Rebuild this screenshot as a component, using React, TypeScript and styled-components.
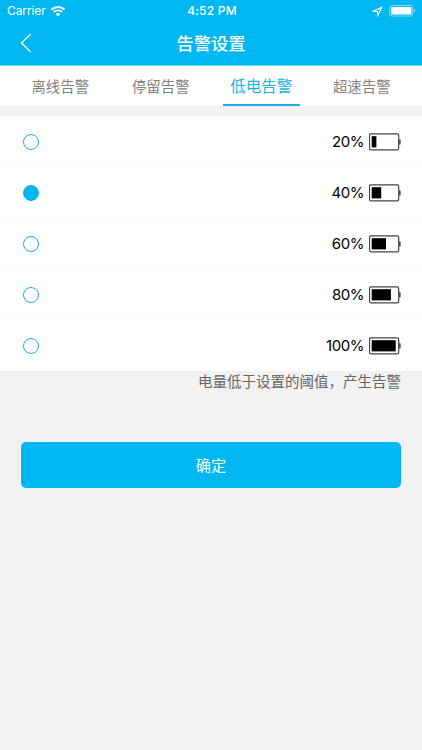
import React, { useState } from "react";
import styled, { createGlobalStyle } from "styled-components";

const BLUE = "#00b7f1";

const GlobalStyle = createGlobalStyle`
  * { box-sizing: border-box; }
  body {
    margin: 0;
    background: #f2f2f2;
    font-family: Inter, "Noto Sans CJK SC", sans-serif;
  }
  button { font: inherit; border: 0; padding: 0; background: none; }
`;

const Screen = styled.div`
  height: 750px;
  background: #f2f2f2;
  overflow: hidden;
`;

const Header = styled.header`
  height: 66px;
  background: ${BLUE};
  color: #fff;
  border-bottom: 1px solid #6fd6f7;
`;

const StatusBar = styled.div`
  height: 22px;
  padding: 0 6px 0 7px;
  display: grid;
  grid-template-columns: 1fr auto 1fr;
  align-items: center;
  line-height: 22px;
`;

const Carrier = styled.div`
  display: flex;
  align-items: center;
  gap: 5px;
  font-size: 12px;
  letter-spacing: -0.1px;
`;

const Clock = styled.div`
  font-size: 12px;
  font-weight: 500;
  letter-spacing: 0.2px;
  padding-left: 1px;
`;

const StatusIcons = styled.div`
  display: flex;
  align-items: center;
  justify-content: flex-end;
  gap: 6px;
`;

const NavBar = styled.div`
  height: 43px;
  display: grid;
  grid-template-columns: 60px 1fr 60px;
  align-items: center;
`;

const BackButton = styled.button`
  display: flex;
  margin-top: -2px;
  padding-left: 20px;
  color: #fff;
`;

const Title = styled.h1`
  margin: 0;
  text-align: center;
  font-size: 17.3px;
  font-weight: 500;
  line-height: 24px;
`;

const Tabs = styled.nav`
  height: 40px;
  padding: 0 10px;
  display: grid;
  grid-template-columns: repeat(4, 1fr);
  justify-items: center;
  background: #fff;
`;

const Tab = styled.button<{ $active: boolean }>`
  width: 77px;
  height: 40px;
  line-height: 39px;
  padding-top: ${(p) => (p.$active ? 1 : 0)}px;
  white-space: nowrap;
  font-size: ${(p) => (p.$active ? 15.5 : 14.4)}px;
  color: ${(p) => (p.$active ? "#1eb1e3" : "#828282")};
  box-shadow: ${(p) => (p.$active ? "inset 0 -2px #1eb1e3" : "none")};
`;

const List = styled.div`
  margin-top: 10px;
  background: #fff;
`;

const Row = styled.div`
  height: 51px;
  padding: 0 21px 0 23px;
  display: flex;
  align-items: center;
  justify-content: space-between;
  border-bottom: 1px solid #f8f8f8;
  &:last-child { border-bottom-color: #fff; }
`;

const Radio = styled.button<{ $on: boolean }>`
  width: 16px;
  height: 16px;
  margin-top: 1px;
  border-radius: 50%;
  border: 1px solid #1eabdf;
  background: ${(p) => (p.$on ? BLUE : "#fff")};
`;

const Level = styled.div`
  display: flex;
  align-items: center;
  gap: 5px;
  color: #000;
  padding-top: 1px;
`;

const Percent = styled.span`
  padding-top: 1px;
  font-size: 15px;
  line-height: 20px;
  letter-spacing: -0.45px;
`;

const Hint = styled.p`
  margin: 0;
  height: 71px;
  padding-right: 21px;
  text-align: right;
  font-size: 14.5px;
  line-height: 21px;
  color: #666;
`;

const Confirm = styled.button`
  display: block;
  width: 380px;
  height: 46px;
  margin-left: 21px;
  padding-top: 1px;
  border-radius: 5px;
  background: ${BLUE};
  color: #fff;
  font-size: 15.2px;
  line-height: 45px;
`;

const WifiIcon = () => (
  <svg width="14" height="11" viewBox="0 0 14 11" fill="none" stroke="#fff">
    <path d="M.5 3.7a9.3 9.3 0 0 1 13 0" strokeWidth="2" />
    <path d="M2.8 6.1a6 6 0 0 1 8.4 0" strokeWidth="1.8" />
    <path d="M7 10.4 4.7 8a3.3 3.3 0 0 1 4.6 0Z" fill="#fff" stroke="none" />
  </svg>
);

const LocationIcon = () => (
  <svg width="11" height="11" viewBox="0 0 11 11" fill="none" stroke="#fff" strokeWidth="1.2" strokeLinejoin="miter">
    <path d="M9.6 1.3 1.5 5.2 5.4 5.5 5.9 9.4Z" />
  </svg>
);

const PhoneBattery = () => (
  <svg width="27" height="12" viewBox="0 0 27 12">
    <rect x=".6" y=".5" width="23.2" height="10.6" rx="2.4" fill="none" stroke="#fff" strokeOpacity=".5" />
    <rect x="2" y="2" width="20.4" height="7.6" rx=".8" fill="#fff" />
    <path d="M25 4.1q1.4.4 1.4 1.7T25 7.5Z" fill="#fff" fillOpacity=".5" />
  </svg>
);

const BackIcon = () => (
  <svg width="12" height="20" viewBox="0 0 12 20" fill="none" stroke="#fff" strokeWidth="1.3">
    <path d="M10.7 1 1.5 10l9.2 9" />
  </svg>
);

const BatteryIcon = ({ fill }: { fill: number }) => (
  <svg width="32" height="18" viewBox="0 0 32 18">
    <rect x=".5" y=".8" width="29.2" height="16" rx="1.6" fill="#fff" stroke="#444" strokeWidth="1.2" />
    <rect x="29.9" y="6.2" width="1.8" height="5.2" rx=".6" fill="#555" />
    <rect x="2.7" y="3.2" width={fill} height="11.2" fill="#000" />
  </svg>
);

const tabs = ["离线告警", "停留告警", "低电告警", "超速告警"];
const levels = [
  { percent: 20, fill: 4.7 },
  { percent: 40, fill: 9.5 },
  { percent: 60, fill: 14.3 },
  { percent: 80, fill: 19.2 },
  { percent: 100, fill: 24 },
];

export default function App() {
  const [tab, setTab] = useState(2);
  const [level, setLevel] = useState(40);
  return (
    <Screen>
      <GlobalStyle />
      <Header>
        <StatusBar>
          <Carrier>Carrier<WifiIcon /></Carrier>
          <Clock>4:52 PM</Clock>
          <StatusIcons><LocationIcon /><PhoneBattery /></StatusIcons>
        </StatusBar>
        <NavBar>
          <BackButton aria-label="返回"><BackIcon /></BackButton>
          <Title>告警设置</Title>
        </NavBar>
      </Header>
      <Tabs>
        {tabs.map((name, i) => (
          <Tab key={name} $active={i === tab} onClick={() => setTab(i)}>{name}</Tab>
        ))}
      </Tabs>
      <List>
        {levels.map(({ percent, fill }) => (
          <Row key={percent}>
            <Radio $on={percent === level} aria-label={`${percent}%`} onClick={() => setLevel(percent)} />
            <Level><Percent>{percent}%</Percent><BatteryIcon fill={fill} /></Level>
          </Row>
        ))}
      </List>
      <Hint>电量低于设置的阈值，产生告警</Hint>
      <Confirm>确定</Confirm>
    </Screen>
  );
}
